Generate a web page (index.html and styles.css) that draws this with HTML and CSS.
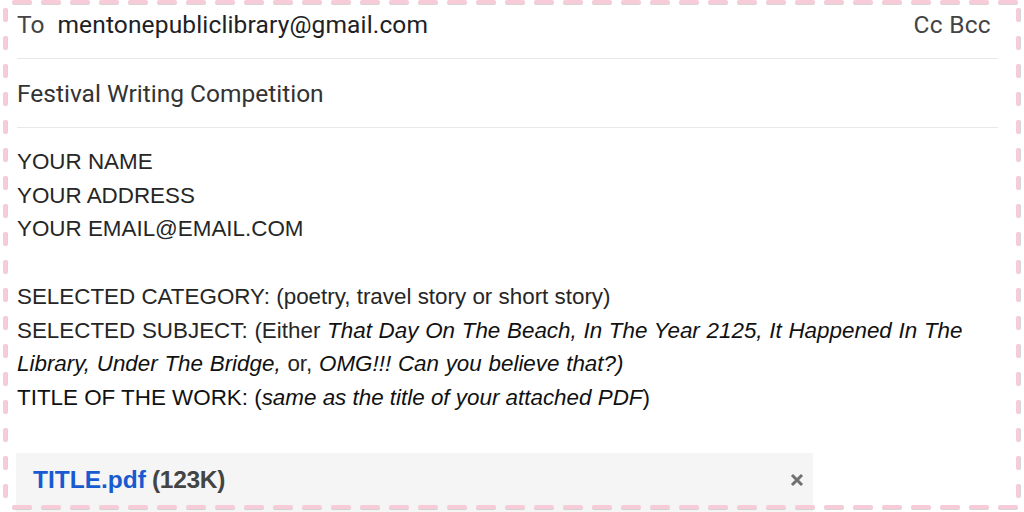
FILE: index.html
```html
<!DOCTYPE html>
<html lang="en">
  <head>
    <meta charset="UTF-8" />
    <title>Compose</title>
    <link rel="stylesheet" href="styles.css">
  </head>
  <body>
    <div class="frame">
      <div class="compose">
        <div class="row toRow">
          <span class="label">To</span>
          <span class="recipient">mentonepubliclibrary@gmail.com</span>
          <span class="ccbcc">Cc Bcc</span>
        </div>
        <div class="row subjectRow">Festival Writing Competition</div>
        <div class="message">
          <div>YOUR NAME</div>
          <div>YOUR ADDRESS</div>
          <div>YOUR EMAIL@EMAIL.COM</div>
          <div><br></div>
          <div>SELECTED CATEGORY: (poetry, travel story or short story)</div>
          <div class="subject">SELECTED SUBJECT: (Either <i>That Day On The Beach, In The Year 2125, It Happened In The Library, Under The Bridge,</i> or, <i>OMG!!! Can you believe that?)</i></div>
          <div class="dark">TITLE OF THE WORK: (<i>same as the title of your attached PDF</i>)</div>
        </div>
        <div class="attachment">
          <span class="fileName">TITLE.pdf</span>
          <span class="fileSize">(123K)</span>
          <svg class="remove" width="14" height="14" viewBox="0 0 14 14">
            <path d="M2 2 L12 12 M12 2 L2 12" />
          </svg>
        </div>
      </div>
      <svg class="dashes" width="1024" height="512" viewBox="0 0 1024 512">
        <g class="shadow">
          <line x1="14" y1="3" x2="1024" y2="3" class="h" />
          <line x1="14" y1="508" x2="1024" y2="508" class="h" />
          <line x1="6" y1="10" x2="6" y2="512" class="v" />
          <line x1="1019" y1="10" x2="1019" y2="512" class="v" />
        </g>
        <g class="pink">
          <line x1="14" y1="2" x2="1024" y2="2" class="h" />
          <line x1="14" y1="507" x2="1024" y2="507" class="h" />
          <line x1="5" y1="10" x2="5" y2="512" class="v" />
          <line x1="1018" y1="10" x2="1018" y2="512" class="v" />
        </g>
      </svg>
    </div>
  </body>
</html>
```

FILE: styles.css
```css
* {
  margin: 0;
  padding: 0;
  box-sizing: border-box;
}

body {
  background: #fff;
  width: 1024px;
  height: 512px;
  overflow: hidden;
}

.frame {
  position: relative;
  width: 1024px;
  height: 512px;
  overflow: hidden;
}

.compose {
  padding: 0 26px 0 17px;
}

.row {
  display: flex;
  align-items: center;
  border-bottom: 1px solid #e8e8e8;
  font-family: Roboto, "Noto Sans", sans-serif;
  font-size: 24.5px;
}

.toRow {
  height: 59px;
  padding-bottom: 9px;
}

.label {
  color: #444;
  margin-right: 13px;
}

.recipient {
  color: #202124;
  letter-spacing: 0.15px;
}

.ccbcc {
  margin-left: auto;
  margin-right: 7px;
  color: #444;
  letter-spacing: 0.3px;
}

.subjectRow {
  height: 69px;
  color: #333;
}

.message {
  padding-top: 17px;
  font-family: "Liberation Sans", Arial, sans-serif;
  font-size: 22.4px;
  line-height: 33.7px;
  color: #262626;
}

.message .subject {
  word-spacing: 0.5px;
}

.message i,
.message .dark {
  color: #111;
}

.attachment {
  display: flex;
  align-items: center;
  width: 797px;
  height: 60px;
  margin-top: 38px;
  margin-left: -1px;
  padding: 0 9px 5px 17px;
  background: #f5f5f5;
  font-family: "Liberation Sans", Arial, sans-serif;
  font-size: 24.5px;
  font-weight: bold;
}

.fileName {
  color: #1a5ad0;
  margin-right: 6px;
}

.fileSize {
  color: #444;
  letter-spacing: -0.3px;
}

.remove {
  margin-left: auto;
}

.remove path {
  stroke: #707070;
  stroke-width: 3;
}

.dashes {
  position: absolute;
  top: 0;
  left: 0;
}

.dashes line {
  stroke-width: 4;
  stroke-linecap: round;
}

.dashes .h {
  stroke-dasharray: 16 13;
}

.dashes .v {
  stroke-dasharray: 10 18;
}

.shadow line {
  stroke: #bbb;
  opacity: 0.6;
}

.pink line {
  stroke: #f8cbd9;
}
```
